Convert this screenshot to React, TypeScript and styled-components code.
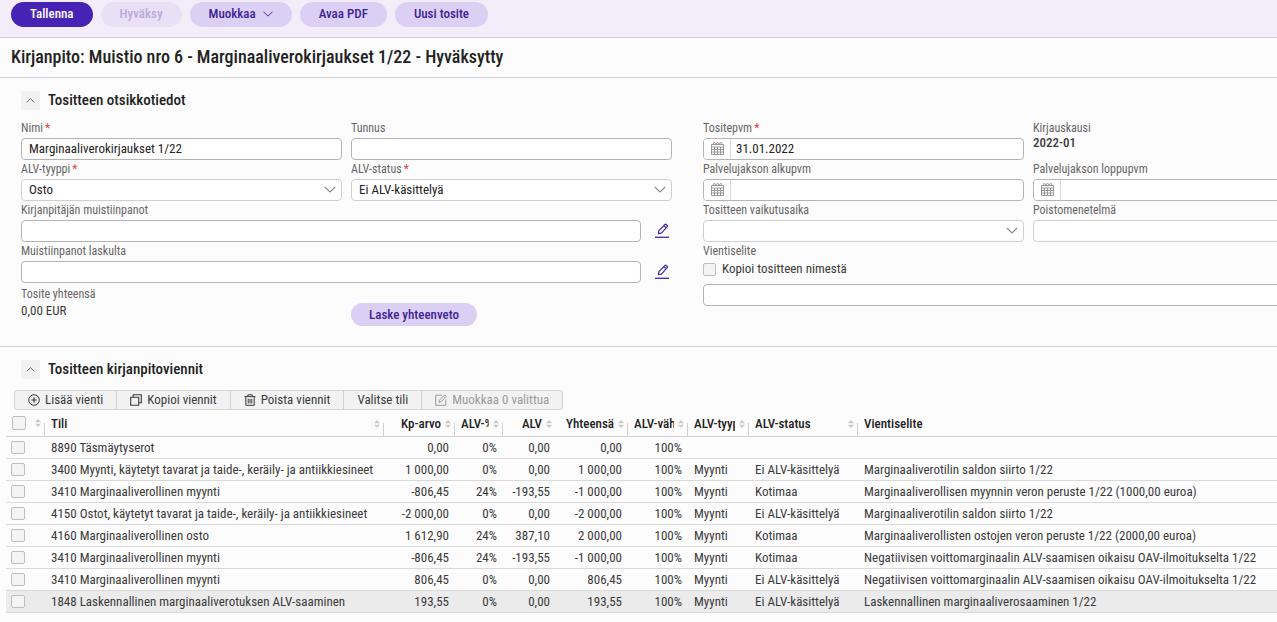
import React from 'react';
import styled, { createGlobalStyle, css } from 'styled-components';

const GlobalStyle = createGlobalStyle`
  *, *::before, *::after { box-sizing: border-box; }
  body {
    margin: 0;
    background: #fcfcfc;
    color: #3a3a3a;
    font-family: "Roboto Condensed", Roboto, "Liberation Sans", sans-serif;
    font-size: 13px;
    line-height: 16px;
    overflow-x: hidden;
  }
  button, input, select { font: inherit; color: inherit; }
  h1, h2 { margin: 0; font-weight: 500; color: #222; }
`;

const ActionBar = styled.header`
  display: flex;
  gap: 8px;
  padding: 2px 11px 10px;
  background: #f3edfa;
  border-bottom: 1px solid #d3cddb;
`;

const PillButton = styled.button<{ $tone?: 'primary' | 'soft'; $small?: boolean }>`
  display: inline-flex;
  align-items: center;
  justify-content: center;
  gap: 7px;
  height: ${p => (p.$small ? 23 : 25)}px;
  padding: ${p => (p.$small ? '0 18px' : '0 19px 2px')};
  border: 0;
  border-radius: 13px;
  font-weight: 500;
  white-space: nowrap;
  cursor: pointer;
  ${p =>
    p.$tone === 'primary'
      ? css`background: #4723b5; color: #fff;`
      : css`background: #dccff4; color: #3d2394;`}
  &:disabled {
    background: #e9e0f6;
    color: #b9a9dd;
    cursor: default;
  }
`;

const TitleBar = styled.div`
  padding: 7px 11px 9px;
  border-bottom: 1px solid #cfcfd4;
`;

const Title = styled.h1`
  font-size: 18px;
  line-height: 23px;
`;

const Section = styled.section<{ $divided?: boolean }>`
  border-bottom: ${p => (p.$divided ? '1px solid #d0d0d0' : '0')};
`;

const SectionHead = styled.div`
  display: flex;
  align-items: center;
  gap: 8px;
  padding: 13px 21px 0;
`;

const SectionTitle = styled.h2`
  font-size: 15px;
  line-height: 19px;
`;

const ToggleButton = styled.button`
  display: grid;
  place-items: center;
  width: 19px;
  height: 19px;
  padding: 0;
  border: 0;
  border-radius: 2px;
  background: #f1f1f1;
  color: #444;
`;

const FormColumns = styled.div`
  display: grid;
  grid-template-columns: minmax(651px, 51%) minmax(651px, 51%);
  column-gap: 31px;
  padding: 12px 0 20px 21px;
`;

const FormGrid = styled.div`
  display: grid;
  grid-template-columns: 1fr 1fr;
  align-content: start;
  gap: 3px 9px;
`;

const Field = styled.div<{ $wide?: boolean }>`
  display: flex;
  flex-direction: column;
  min-width: 0;
  grid-column: ${p => (p.$wide ? '1 / -1' : 'auto')};
`;

const labelText = css`
  font-size: 12px;
  line-height: 13px;
  color: #666;
`;

const Label = styled.label`
  ${labelText}
  padding-bottom: 3px;
`;

const Caption = styled.span`
  ${labelText}
  padding-bottom: 1px;
`;

const Required = styled.span`
  color: #e0404c;
  margin-left: 2px;
`;

const TextInput = styled.input`
  width: 100%;
  height: 22px;
  padding: 0 7px 2px;
  border: 1px solid #b4b4b4;
  border-radius: 4px;
  background: #fff;
  color: #222;
`;

const SelectFrame = styled.div`
  position: relative;
  display: flex;
  svg {
    position: absolute;
    right: 6px;
    top: 7px;
    pointer-events: none;
    color: #8a8a8a;
  }
`;

const SelectBox = styled.select`
  appearance: none;
  width: 100%;
  height: 22px;
  padding: 0 24px 0 7px;
  border: 1px solid #cfcfcf;
  border-radius: 4px;
  background: #fff;
  color: #222;
`;

const DateFrame = styled.div`
  display: flex;
  height: 22px;
  border: 1px solid #b4b4b4;
  border-radius: 4px;
  background: #fff;
  overflow: hidden;
`;

const CalendarButton = styled.button`
  flex: none;
  display: grid;
  place-items: center;
  width: 27px;
  padding: 0 0 2px 1px;
  border: 0;
  border-right: 1px solid #d8d8d8;
  background: #fff;
  color: #8f8f8f;
`;

const DateInput = styled.input`
  flex: 1;
  min-width: 0;
  padding: 0 5px;
  border: 0;
  background: transparent;
  color: #222;
`;

const NoteRow = styled.div`
  display: flex;
  align-items: center;
  gap: 10px;
`;

const IconButton = styled.button`
  flex: none;
  display: grid;
  place-items: center;
  width: 21px;
  height: 22px;
  padding: 0 0 2px;
  border: 0;
  background: none;
  color: #43289f;
`;

const Value = styled.span<{ $strong?: boolean }>`
  font-weight: ${p => (p.$strong ? 500 : 400)};
  line-height: ${p => (p.$strong ? 14 : 18)}px;
`;

const SummaryField = styled(Field)`
  padding-top: 2px;
`;

const SummaryCell = styled.div`
  padding-top: 17px;
  line-height: 0;
`;

const CheckLine = styled.label`
  display: flex;
  align-items: center;
  gap: 6px;
  line-height: 16px;
  padding-bottom: 7px;
`;

const Tick = styled.input`
  appearance: none;
  flex: none;
  width: 13px;
  height: 13px;
  margin: 0;
  border: 1px solid #bdbdbd;
  border-radius: 2px;
  background: #f4f4f4;
  &:checked { background: #4723b5; }
`;

const Toolbar = styled.div`
  display: flex;
  width: fit-content;
  margin: 11px 14px 2px;
  border: 1px solid #d2d2d2;
  border-radius: 3px;
  background: #f2f2f2;
`;

const ToolButton = styled.button`
  display: inline-flex;
  align-items: center;
  gap: 5px;
  height: 18px;
  padding: 0 13px;
  border: 0;
  background: none;
  white-space: nowrap;
  & + & { border-left: 1px solid #d2d2d2; }
  &:disabled { color: #9b9b9b; }
`;

const Entries = styled.table`
  width: calc(100% - 6px);
  margin-left: 6px;
  table-layout: fixed;
  border-collapse: separate;
  border-spacing: 0;
`;

const Col = styled.col<{ $w?: number }>`
  width: ${p => (p.$w ? `${p.$w}px` : 'auto')};
`;

const HeadCell = styled.th<{ $line?: boolean }>`
  height: 25px;
  padding: 0 4px 0 6px;
  border-bottom: 1px solid #cfcfcf;
  background: ${p =>
    p.$line ? 'linear-gradient(#cfcfcf, #cfcfcf) right bottom / 1px 13px no-repeat' : 'none'};
  color: #222;
  font-weight: 500;
  text-align: left;
`;

const HeadContent = styled.div<{ $end?: boolean }>`
  display: flex;
  align-items: center;
  gap: 4px;
  svg { flex: none; color: #c9c9c9; }
  span {
    flex: 1;
    overflow: hidden;
    white-space: nowrap;
    text-align: ${p => (p.$end ? 'right' : 'left')};
  }
`;

const BodyRow = styled.tr<{ $active?: boolean }>`
  background: ${p => (p.$active ? '#ebebeb' : 'transparent')};
`;

const Cell = styled.td<{ $end?: boolean }>`
  height: 22px;
  padding: ${p => (p.$end ? '0 6px 0 0' : '0 0 0 6px')};
  border-bottom: 1px solid #d9d9d9;
  overflow: hidden;
  white-space: nowrap;
  text-align: ${p => (p.$end ? 'right' : 'left')};
`;

const TickCell = styled(Cell)`
  padding-left: 5px;
  line-height: 0;
`;

const RowTick = styled(Tick)`
  width: 14px;
  vertical-align: middle;
`;

const HeadTick = styled(Tick)`
  width: 14px;
  height: 14px;
`;

const Spread = styled.div`
  display: flex;
  align-items: center;
  justify-content: space-between;
  padding-bottom: 3px;
  svg { color: #c9c9c9; }
`;

const Chevron = ({ up, w = 12, h = 7 }: { up?: boolean; w?: number; h?: number }) => (
  <svg width={w} height={h} viewBox="0 0 12 7" fill="none" stroke="currentColor" strokeWidth="1.1" aria-hidden="true">
    <path d={up ? 'M.8 6 6 1l5.2 5' : 'M.8 1 6 6l5.2-5'} />
  </svg>
);

const SortIcon = () => (
  <svg width="6" height="8" viewBox="0 0 6 8" fill="currentColor" aria-hidden="true">
    <path d="M3 0 6 3.3H0zM3 8 0 4.7h6z" />
  </svg>
);

const CalendarIcon = () => (
  <svg width="13" height="13" viewBox="0 0 13 13" fill="none" stroke="currentColor" aria-hidden="true">
    <path d="M.5 2.500h12v10H.5zM.5 5h12M.5 7.500h12M.5 10h12M3.500 5v7.500M6.500 5v7.500M9.500 5v7.500" strokeWidth=".9" />
    <path d="M2.300 3V1.500a1 1 0 0 1 2 0V3M5.500 3V1.500a1 1 0 0 1 2 0V3M8.700 3V1.500a1 1 0 0 1 2 0V3" />
  </svg>
);

const PencilIcon = () => (
  <svg width="14" height="15" viewBox="0 0 14 15" fill="none" stroke="currentColor" aria-hidden="true">
    <path d="M0 14.300h14" strokeWidth="1.300" />
    <path d="M3.400 10.700 3.900 7.600 10 1.500q.6-.6 1.200 0l1 1q.6.6 0 1.200L6.400 10.100zM9 2.700l2.300 2.200" strokeWidth="1.200" strokeLinejoin="round" />
  </svg>
);

const PlusIcon = () => (
  <svg width="12" height="12" viewBox="0 0 12 12" fill="none" stroke="currentColor" aria-hidden="true">
    <circle cx="6" cy="6" r="5.300" />
    <path d="M6 3.200v5.600M3.200 6h5.600" strokeWidth="1.200" />
  </svg>
);

const CopyIcon = () => (
  <svg width="12" height="12" viewBox="0 0 12 12" fill="none" stroke="currentColor" strokeWidth="1.100" aria-hidden="true">
    <path d="M.7 3.200h8v8h-8zM3.200 3V.7h8.100v8.100H8.900" />
  </svg>
);

const TrashIcon = () => (
  <svg width="12" height="12" viewBox="0 0 12 12" fill="none" stroke="currentColor" aria-hidden="true">
    <path d="M.5 2.600h11M3.800 2.400V.8h4.400v1.600M1.800 2.800v8.500h8.400V2.800M4.200 4.800v4.700M6 4.800v4.700M7.800 4.800v4.700" />
  </svg>
);

const EditIcon = () => (
  <svg width="12" height="12" viewBox="0 0 12 12" fill="none" stroke="currentColor" aria-hidden="true">
    <path d="M7 1.200H.7v10.100h10.100V5.500M4 8.300l.5-2.200L9.700.9l1.500 1.500L6 7.700z" />
  </svg>
);

type LabelProps = { id: string; label: string; required?: boolean };

const FieldLabel = ({ id, label, required }: LabelProps) => (
  <Label htmlFor={id}>
    {label}
    {required && <Required>*</Required>}
  </Label>
);

const TextField = ({ value, ...rest }: LabelProps & { value?: string }) => (
  <Field>
    <FieldLabel {...rest} />
    <TextInput id={rest.id} defaultValue={value} />
  </Field>
);

const SelectField = ({ value = '', ...rest }: LabelProps & { value?: string }) => (
  <Field>
    <FieldLabel {...rest} />
    <SelectFrame>
      <SelectBox id={rest.id} defaultValue={value}>
        <option>{value}</option>
      </SelectBox>
      <Chevron />
    </SelectFrame>
  </Field>
);

const DateField = ({ value, ...rest }: LabelProps & { value?: string }) => (
  <Field>
    <FieldLabel {...rest} />
    <DateFrame>
      <CalendarButton aria-label="Avaa kalenteri"><CalendarIcon /></CalendarButton>
      <DateInput id={rest.id} defaultValue={value} />
    </DateFrame>
  </Field>
);

const NoteField = ({ id, label }: LabelProps) => (
  <Field $wide>
    <FieldLabel id={id} label={label} />
    <NoteRow>
      <TextInput id={id} />
      <IconButton aria-label="Muokkaa"><PencilIcon /></IconButton>
    </NoteRow>
  </Field>
);

const columns: { title: string; width?: number; end?: boolean; line?: boolean }[] = [
  { title: 'Tili', width: 339, line: true },
  { title: 'Kp-arvo', width: 71, end: true, line: true },
  { title: 'ALV-%', width: 48, end: true, line: true },
  { title: 'ALV', width: 53, end: true },
  { title: 'Yhteensä', width: 72, end: true, line: true },
  { title: 'ALV-väh.%', width: 60, end: true, line: true },
  { title: 'ALV-tyyppi', width: 61, line: true },
  { title: 'ALV-status', width: 109, line: true },
  { title: 'Vientiselite' },
];

const clippedLeft = ['ALV-%', 'ALV-väh.%'];

const rows: string[][] = [
  ['8890 Täsmäytyserot', '0,00', '0%', '0,00', '0,00', '100%', '', '', ''],
  ['3400 Myynti, käytetyt tavarat ja taide-, keräily- ja antiikkiesineet', '1 000,00', '0%', '0,00', '1 000,00', '100%', 'Myynti', 'Ei ALV-käsittelyä', 'Marginaaliverotilin saldon siirto 1/22'],
  ['3410 Marginaaliverollinen myynti', '-806,45', '24%', '-193,55', '-1 000,00', '100%', 'Myynti', 'Kotimaa', 'Marginaaliverollisen myynnin veron peruste 1/22 (1000,00 euroa)'],
  ['4150 Ostot, käytetyt tavarat ja taide-, keräily- ja antiikkiesineet', '-2 000,00', '0%', '0,00', '-2 000,00', '100%', 'Myynti', 'Ei ALV-käsittelyä', 'Marginaaliverotilin saldon siirto 1/22'],
  ['4160 Marginaaliverollinen osto', '1 612,90', '24%', '387,10', '2 000,00', '100%', 'Myynti', 'Kotimaa', 'Marginaaliverollisten ostojen veron peruste 1/22 (2000,00 euroa)'],
  ['3410 Marginaaliverollinen myynti', '-806,45', '24%', '-193,55', '-1 000,00', '100%', 'Myynti', 'Kotimaa', 'Negatiivisen voittomarginaalin ALV-saamisen oikaisu OAV-ilmoitukselta 1/22'],
  ['3410 Marginaaliverollinen myynti', '806,45', '0%', '0,00', '806,45', '100%', 'Myynti', 'Ei ALV-käsittelyä', 'Negatiivisen voittomarginaalin ALV-saamisen oikaisu OAV-ilmoitukselta 1/22'],
  ['1848 Laskennallinen marginaaliverotuksen ALV-saaminen', '193,55', '0%', '0,00', '193,55', '100%', 'Myynti', 'Ei ALV-käsittelyä', 'Laskennallinen marginaaliverosaaminen 1/22'],
];

export default function App() {
  return (
    <>
      <GlobalStyle />
      <ActionBar>
        <PillButton $tone="primary">Tallenna</PillButton>
        <PillButton disabled>Hyväksy</PillButton>
        <PillButton>Muokkaa <Chevron w={10} h={6} /></PillButton>
        <PillButton>Avaa PDF</PillButton>
        <PillButton>Uusi tosite</PillButton>
      </ActionBar>
      <TitleBar>
        <Title>Kirjanpito: Muistio nro 6 - Marginaaliverokirjaukset 1/22 - Hyväksytty</Title>
      </TitleBar>

      <main>
        <Section $divided>
          <SectionHead>
            <ToggleButton aria-label="Piilota otsikkotiedot"><Chevron up w={9} h={5} /></ToggleButton>
            <SectionTitle>Tositteen otsikkotiedot</SectionTitle>
          </SectionHead>
          <FormColumns>
            <FormGrid>
              <TextField id="nimi" label="Nimi" required value="Marginaaliverokirjaukset 1/22" />
              <TextField id="tunnus" label="Tunnus" />
              <SelectField id="alv-tyyppi" label="ALV-tyyppi" required value="Osto" />
              <SelectField id="alv-status" label="ALV-status" required value="Ei ALV-käsittelyä" />
              <NoteField id="muistiinpanot" label="Kirjanpitäjän muistiinpanot" />
              <NoteField id="laskulta" label="Muistiinpanot laskulta" />
              <SummaryField>
                <Caption>Tosite yhteensä</Caption>
                <Value>0,00 EUR</Value>
              </SummaryField>
              <SummaryCell>
                <PillButton $small>Laske yhteenveto</PillButton>
              </SummaryCell>
            </FormGrid>
            <FormGrid>
              <DateField id="tositepvm" label="Tositepvm" required value="31.01.2022" />
              <Field>
                <Caption>Kirjauskausi</Caption>
                <Value $strong>2022-01</Value>
              </Field>
              <DateField id="alkupvm" label="Palvelujakson alkupvm" />
              <DateField id="loppupvm" label="Palvelujakson loppupvm" />
              <SelectField id="vaikutusaika" label="Tositteen vaikutusaika" />
              <SelectField id="poistomenetelma" label="Poistomenetelmä" />
              <Field $wide>
                <FieldLabel id="vientiselite" label="Vientiselite" />
                <CheckLine>
                  <Tick type="checkbox" />
                  Kopioi tositteen nimestä
                </CheckLine>
                <TextInput id="vientiselite" />
              </Field>
            </FormGrid>
          </FormColumns>
        </Section>

        <Section>
          <SectionHead>
            <ToggleButton aria-label="Piilota kirjanpitoviennit"><Chevron up w={9} h={5} /></ToggleButton>
            <SectionTitle>Tositteen kirjanpitoviennit</SectionTitle>
          </SectionHead>
          <Toolbar>
            <ToolButton><PlusIcon /> Lisää vienti</ToolButton>
            <ToolButton><CopyIcon /> Kopioi viennit</ToolButton>
            <ToolButton><TrashIcon /> Poista viennit</ToolButton>
            <ToolButton>Valitse tili</ToolButton>
            <ToolButton disabled><EditIcon /> Muokkaa 0 valittua</ToolButton>
          </Toolbar>
          <Entries>
            <colgroup>
              <Col $w={39} />
              {columns.map(c => <Col key={c.title} $w={c.width} />)}
            </colgroup>
            <thead>
              <tr>
                <HeadCell $line>
                  <Spread>
                    <HeadTick type="checkbox" aria-label="Valitse kaikki" />
                    <SortIcon />
                  </Spread>
                </HeadCell>
                {columns.map(c => (
                  <HeadCell key={c.title} $line={c.line}>
                    <HeadContent $end={c.end && !clippedLeft.includes(c.title)}>
                      <span>{c.title}</span>
                      {c.width && <SortIcon />}
                    </HeadContent>
                  </HeadCell>
                ))}
              </tr>
            </thead>
            <tbody>
              {rows.map((row, r) => (
                <BodyRow key={r} $active={r === rows.length - 1}>
                  <TickCell><RowTick type="checkbox" aria-label={`Valitse ${row[0]}`} /></TickCell>
                  {row.map((text, i) => <Cell key={i} $end={columns[i].end}>{text}</Cell>)}
                </BodyRow>
              ))}
            </tbody>
          </Entries>
        </Section>
      </main>
    </>
  );
}
